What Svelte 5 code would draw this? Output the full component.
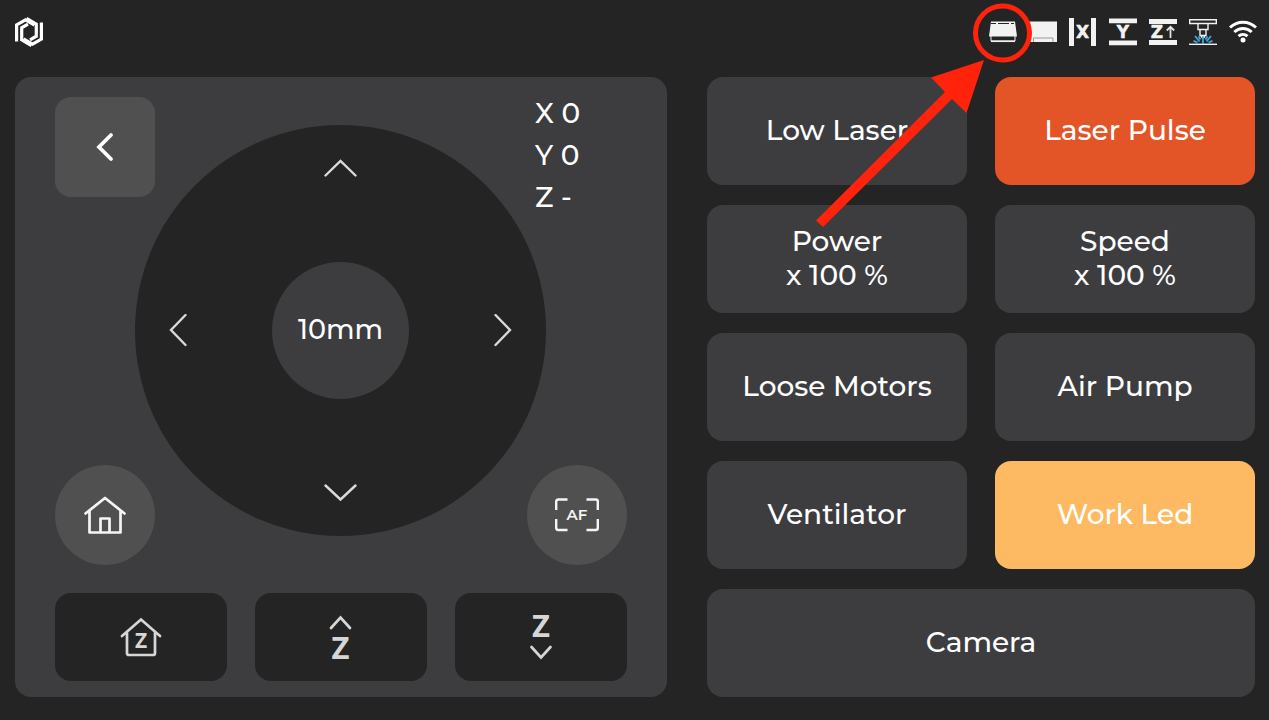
<script>
  let step = $state(10);
  const steps = [1, 10, 50];
  const nextStep = () => (step = steps[(steps.indexOf(step) + 1) % steps.length]);

  const position = [
    { axis: 'X', value: '0' },
    { axis: 'Y', value: '0' },
    { axis: 'Z', value: '-' }
  ];

  const actions = [
    { label: 'Low Laser' },
    { label: 'Laser Pulse', tone: 'orange' },
    { label: 'Power', value: 'x 100 %' },
    { label: 'Speed', value: 'x 100 %' },
    { label: 'Loose Motors' },
    { label: 'Air Pump' },
    { label: 'Ventilator' },
    { label: 'Work Led', tone: 'amber' },
    { label: 'Camera', tone: 'wide' }
  ];
</script>

<div class="screen">
  <header>
    <svg class="logo" viewBox="0 0 28 32" fill="none" stroke="#fff" stroke-width="3.2" aria-hidden="true">
      <path d="M1.6 25.5V8.9L10.5 3.8L19.5 9" />
      <path d="M13 8.2L6.7 11.8V23.8L16.5 29.5" />
      <path d="M26.4 6.5V23.1L17.5 28.2L8.5 23" />
      <path d="M15 23.8L21.3 20.2V8.2L11.5 2.5" />
    </svg>
    <div class="status">
      <svg viewBox="0 0 28 28" aria-hidden="true">
        <path d="M2 3.5H26L28 18.5H0Z" fill="#f2f2f2" />
        <path d="M2 5.5H7M9 5.5H20M22 5.5H25" stroke="#242424" />
        <path d="M2 18V23H26V18" fill="none" stroke="#f2f2f2" />
        <path d="M2 23.3H26" stroke="#f2f2f2" stroke-width="1.5" />
      </svg>
      <svg viewBox="0 0 28 28" aria-hidden="true">
        <path d="M0 3.5H28V24H0Z" fill="#f2f2f2" />
        <path d="M4.5 24V20H24V24" fill="none" stroke="#999" />
      </svg>
      <svg viewBox="0 0 28 28" fill="#f2f2f2" aria-hidden="true">
        <path d="M0 0H5V28H0ZM22 0H27V28H22Z" />
        <text class="block" x="13.5" y="20" font-size="17" text-anchor="middle">x</text>
      </svg>
      <svg viewBox="0 0 28 28" fill="#f2f2f2" aria-hidden="true">
        <path d="M0 .5H28V5.3H0ZM0 22.5H28V27.3H0Z" />
        <text class="block" x="14" y="20" font-size="17" text-anchor="middle">Y</text>
      </svg>
      <svg viewBox="0 0 28 28" fill="#f2f2f2" aria-hidden="true">
        <path d="M0 1H28V6H0ZM0 22H28V27H0Z" />
        <text class="block" x="8" y="20" font-size="17" text-anchor="middle">Z</text>
        <path d="M21.5 20V8.5M17.8 12.5L21.5 8.8L25.2 12.5" fill="none" stroke="#e2e2e2" stroke-width="1.8" />
      </svg>
      <svg viewBox="0 0 28 28" fill="none" stroke="#f2f2f2" stroke-width="1.4" aria-hidden="true">
        <path d="M.7 1.7H27.3V5.5H.7ZM9 5.5V11.5H19V5.5M11 11.5V17.5H17V11.5M12 17.5L13 19.5H15L16 17.5" />
        <path d="M14 19V25.5M9.5 18.5L11.5 21.5M18.5 18.5L16.5 21.5M6 18L10.5 23.5M22 18L17.5 23.5M4.5 22.8L8.5 24.5M23.5 22.8L19.5 24.5" stroke="#3ba9e0" stroke-width="1.8" />
        <path d="M0 26.3H28" />
      </svg>
      <svg viewBox="0 0 28 28" fill="none" stroke="#fff" stroke-width="3" aria-hidden="true">
        <path d="M1 9.5C8.5 2.5 19.5 2.5 27 9.5M5.3 14C10.5 9.2 17.5 9.2 22.7 14M9.5 18.2C12.2 15.8 15.8 15.8 18.5 18.2" />
        <circle cx="14" cy="22" r="2.5" fill="#fff" stroke="none" />
      </svg>
    </div>
  </header>

  <main>
    <section class="panel" aria-label="Motion control">
      <div class="stage">
        <div class="dial">
          <button class="up" aria-label="Move up">
            <svg width="34" height="18" viewBox="0 0 34 18"><path d="M1.5 16.5L16.5 2L31.5 16.5" /></svg>
          </button>
          <button class="left" aria-label="Move left">
            <svg width="18" height="34" viewBox="0 0 18 34"><path d="M16.5 1L2 16L16.5 31" /></svg>
          </button>
          <button class="step" onclick={nextStep}>{step}mm</button>
          <button class="right" aria-label="Move right">
            <svg width="18" height="34" viewBox="0 0 18 34"><path d="M1.5 1L16 16L1.5 31" /></svg>
          </button>
          <button class="down" aria-label="Move down">
            <svg width="34" height="18" viewBox="0 0 34 18"><path d="M1.5 1.5L16.5 15.5L31.5 1.5" /></svg>
          </button>
        </div>
        <button class="corner back" aria-label="Back">
          <svg width="18" height="30" viewBox="0 0 18 30" fill="none" stroke="#fff" stroke-width="3.8" stroke-linecap="round">
            <path d="M15 3L3 15L15 27" />
          </svg>
        </button>
        <div class="position">
          {#each position as p}
            <span>{p.axis} {p.value}</span>
          {/each}
        </div>
        <button class="corner home" aria-label="Home">
          <svg width="42" height="38" viewBox="0 0 42 38" fill="none" stroke="#f5f5f5" stroke-width="2.7" stroke-linecap="round" stroke-linejoin="round">
            <path d="M1.5 17.5L21 2L40.5 17.5M5.5 15V36.5H36.5V15" />
            <path d="M16.5 36V22.5H25.5V36" />
          </svg>
        </button>
        <button class="corner focus" aria-label="Auto focus">
          <svg width="44" height="34" viewBox="0 0 44 34" fill="none" stroke="#f5f5f5" stroke-width="2.4">
            <path d="M1.2 12V3.5Q1.2 1.5 3.2 1.5H12.5M31.5 1.5H40.8Q42.8 1.5 42.8 3.5V12M42.8 21V30Q42.8 32 40.8 32H31.5M12.5 32H3.2Q1.2 32 1.2 30V21" />
            <text class="af" x="22" y="22" font-size="15" text-anchor="middle" fill="#f5f5f5" stroke="none">AF</text>
          </svg>
        </button>
      </div>

      <div class="zrow">
        <button aria-label="Home Z">
          <svg width="44" height="64" viewBox="0 0 44 64">
            <path d="M3 31L22 14.5L41 31M8 28V48Q8 50 10 50H34Q36 50 36 48V28" />
            <text x="22" y="43" font-size="21">Z</text>
          </svg>
        </button>
        <button aria-label="Raise Z">
          <svg width="44" height="64" viewBox="0 0 44 64">
            <path d="M12 23L21.5 12.5L31 23" />
            <text x="21.5" y="54" font-size="31">Z</text>
          </svg>
        </button>
        <button aria-label="Lower Z">
          <svg width="44" height="64" viewBox="0 0 44 64">
            <text x="22" y="32" font-size="31">Z</text>
            <path d="M12.5 42L22 52.5L31.5 42" />
          </svg>
        </button>
      </div>
    </section>

    <section class="actions" aria-label="Machine functions">
      {#each actions as a}
        <button class={a.tone}>
          <span>{a.label}</span>
          {#if a.value}<span>{a.value}</span>{/if}
        </button>
      {/each}
    </section>
  </main>

  <svg class="callout" width="220" height="230" viewBox="0 0 220 230" aria-hidden="true">
    <circle cx="188.5" cy="33" r="27" fill="none" stroke="#ff230c" stroke-width="5" />
    <path d="M170 60L152.5 113L138 99L9 227L2 220.5L131 92L117 77.5Z" fill="#ff230c" />
  </svg>
</div>

<style>
  :global(body) {
    margin: 0;
    background: #242424;
  }
  .screen {
    position: relative;
    box-sizing: border-box;
    min-height: 100vh;
    display: flex;
    flex-direction: column;
    background: #242424;
    color: #fff;
    font-family: Montserrat, Inter, sans-serif;
    font-size: 28px;
    font-weight: 500;
    line-height: 34px;
  }
  header {
    display: flex;
    align-items: center;
    justify-content: space-between;
    padding: 16px 12px 28px 15px;
  }
  .logo {
    width: 28px;
    height: 32px;
  }
  .status {
    display: flex;
    gap: 12px;
  }
  .status svg {
    width: 28px;
    height: 28px;
  }
  .block {
    font-family: "DejaVu Sans", sans-serif;
    font-weight: 700;
    text-transform: uppercase;
    stroke: #f2f2f2;
    stroke-width: 0.5px;
  }
  main {
    flex: 1;
    display: grid;
    grid-template-columns: 652fr 548fr;
    gap: 40px;
    padding: 1px 14px 23px 15px;
  }
  button {
    border: 0;
    padding: 0;
    display: flex;
    align-items: center;
    justify-content: center;
    background: #3d3d3f;
    color: inherit;
    font: inherit;
    cursor: pointer;
  }
  .panel {
    display: flex;
    flex-direction: column;
    gap: 28px;
    padding: 20px 40px 16px;
    border-radius: 16px;
    background: #3d3d3f;
  }
  .stage {
    flex: 1;
    display: grid;
  }
  .stage > * {
    grid-area: 1 / 1;
  }
  .dial {
    place-self: center;
    margin: 0 1px 1px 0;
    display: grid;
    grid-template: repeat(3, 137px) / repeat(3, 137px);
    grid-template-areas: ". up ." "left step right" ". down .";
    border-radius: 50%;
    background: #242424;
  }
  .dial button {
    box-sizing: border-box;
    padding: 34px;
    background: none;
  }
  .dial path {
    fill: none;
    stroke: #dadada;
    stroke-width: 2.4;
    stroke-linecap: round;
  }
  .dial .up {
    grid-area: up;
    align-items: flex-start;
  }
  .dial .left {
    grid-area: left;
    justify-content: flex-start;
  }
  .dial .right {
    grid-area: right;
    justify-content: flex-end;
  }
  .dial .down {
    grid-area: down;
    align-items: flex-end;
  }
  .dial .step {
    grid-area: step;
    padding: 0 0 2px;
    border-radius: 50%;
    background: #3d3d3f;
    font-size: 27px;
  }
  .corner {
    width: 100px;
    height: 100px;
    border-radius: 50%;
    background: #505050;
  }
  .back {
    place-self: start;
    border-radius: 16px;
  }
  .home {
    place-self: end start;
  }
  .focus {
    place-self: end;
  }
  .af {
    font-weight: 600;
  }
  .position {
    place-self: start end;
    width: 92px;
    display: flex;
    flex-direction: column;
    gap: 10px;
    line-height: 32px;
  }
  .zrow {
    display: grid;
    grid-template-columns: repeat(3, 1fr);
    gap: 28px;
  }
  .zrow button {
    height: 88px;
    border-radius: 16px;
    background: #242424;
  }
  .zrow path {
    fill: none;
    stroke: #d6d6d6;
    stroke-width: 2.7;
    stroke-linecap: round;
  }
  .zrow text {
    fill: #d6d6d6;
    font-family: "Noto Sans", sans-serif;
    font-weight: 700;
    text-anchor: middle;
  }
  .actions {
    display: grid;
    grid-template-columns: 1fr 1fr;
    grid-auto-rows: 1fr;
    gap: 20px 28px;
  }
  .actions button {
    flex-direction: column;
    padding-bottom: 2px;
    border-radius: 16px;
  }
  .actions .orange {
    background: #e35427;
  }
  .actions .amber {
    background: #fdba62;
  }
  .actions .wide {
    grid-column: 1 / -1;
  }
  .callout {
    position: absolute;
    top: 0;
    right: 235px;
    pointer-events: none;
  }
</style>
